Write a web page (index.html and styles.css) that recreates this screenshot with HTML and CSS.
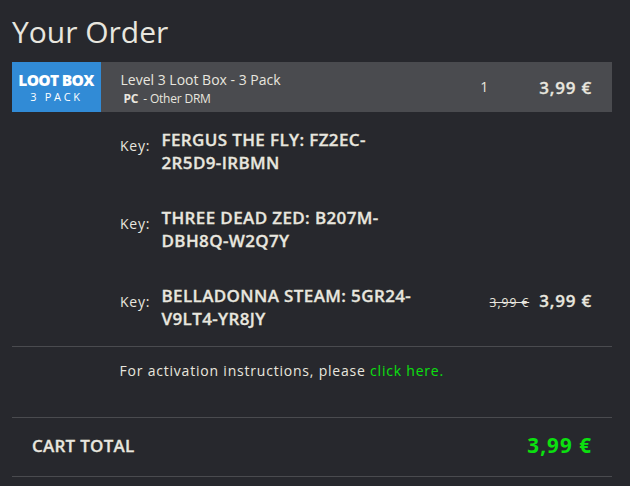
FILE: index.html
```
<!DOCTYPE html>
<html lang="en">
<head>
    <meta charset="UTF-8">
    <title>Your Order</title>
    <link rel="stylesheet" href="styles.css">
</head>
<body>
    <div class="order">
        <h1>Your Order</h1>

        <div class="product">
            <div class="thumb">
                <strong>LOOT BOX</strong>
                <span>3 PACK</span>
            </div>
            <div class="product-info">
                <div class="product-name">Level 3 Loot Box - 3 Pack</div>
                <div class="product-drm"><b>PC</b><span>- Other DRM</span></div>
            </div>
            <div class="quantity">1</div>
            <div class="price">3,99 €</div>
        </div>

        <div class="key-row">
            <span class="key-label">Key:</span>
            <span class="key">FERGUS THE FLY: FZ2EC-<br>2R5D9-IRBMN</span>
        </div>
        <div class="key-row">
            <span class="key-label">Key:</span>
            <span class="key">THREE DEAD ZED: B207M-<br>DBH8Q-W2Q7Y</span>
        </div>
        <div class="key-row">
            <span class="key-label">Key:</span>
            <span class="key">BELLADONNA STEAM: 5GR24-<br>V9LT4-YR8JY</span>
            <del class="old-price">3,99 €</del>
            <span class="price">3,99 €</span>
        </div>

        <p class="activation">For activation instructions, please <a href="#">click here.</a></p>

        <div class="total">
            <span class="total-label">CART TOTAL</span>
            <span class="total-price">3,99 €</span>
        </div>
    </div>
</body>
</html>
```
FILE: styles.css
```
* {
    box-sizing: border-box;
}

body {
    margin: 0;
    background: #27282d;
    color: #e8e6df;
    font-family: "Open Sans", "Noto Sans", sans-serif;
    font-size: 14px;
}

.order {
    width: 600px;
    margin-left: 12px;
}

h1 {
    height: 62px;
    margin: 0;
    padding-top: 12px;
    font-size: 30px;
    font-weight: 400;
    line-height: 40px;
}

.product {
    display: flex;
    align-items: center;
    height: 50px;
    padding-right: 20px;
    background: #4a4b4f;
}

.thumb {
    display: flex;
    flex-direction: column;
    align-items: center;
    width: 89px;
    height: 50px;
    padding-top: 8px;
    background: #318bd6;
    color: #fff;
    white-space: nowrap;
}

.thumb strong {
    padding-right: 1px;
    font-size: 15.5px;
    font-weight: 800;
    line-height: 21px;
    letter-spacing: -0.7px;
}

.thumb span {
    font-size: 11px;
    line-height: 15px;
    letter-spacing: 2.7px;
    margin-top: -2px;
}

.product-info {
    flex: 1;
    padding: 1px 0 0 19.5px;
}

.product-name {
    padding-top: 1px;
    font-size: 14px;
    line-height: 19px;
}

.product-drm {
    display: flex;
    gap: 5px;
    padding: 1px 0 0 3px;
    font-size: 12px;
    line-height: 17px;
    letter-spacing: -0.2px;
}

.quantity {
    width: 59px;
    padding-bottom: 2px;
}

.price {
    font-size: 17px;
    font-weight: 600;
    line-height: 23px;
    letter-spacing: 0.8px;
}

.key,
.price,
.total-label {
    -webkit-text-stroke: 0.3px currentColor;
}

.key-row {
    display: flex;
    height: 78px;
    padding: 16px 20px 0 108px;
}

.key-label {
    width: 41.5px;
    padding-top: 8px;
    line-height: 20px;
    letter-spacing: 0.8px;
}

.key {
    flex: 1;
    font-size: 17px;
    font-weight: 600;
    line-height: 23px;
    letter-spacing: 0.37px;
}

.old-price {
    margin-right: 10px;
    padding-top: 10px;
    font-size: 12px;
    line-height: 17px;
    letter-spacing: 1px;
}

.key-row .price {
    padding-top: 5px;
}

.activation {
    height: 71px;
    margin: 0;
    padding: 14px 0 0 107.5px;
    border-top: 1px solid #4a4b4f;
    line-height: 20px;
    letter-spacing: 0.79px;
}

.activation a {
    color: #0be00f;
    text-decoration: none;
}

.total {
    display: flex;
    align-items: center;
    justify-content: space-between;
    height: 60px;
    padding: 0 20px 4px;
    border-top: 1px solid #4a4b4f;
    border-bottom: 1px solid #4a4b4f;
}

.total-label {
    font-size: 17px;
    font-weight: 600;
    letter-spacing: 0.25px;
}

.total-price {
    color: #0be00f;
    font-size: 20.5px;
    font-weight: 700;
    letter-spacing: 1.1px;
}
```
